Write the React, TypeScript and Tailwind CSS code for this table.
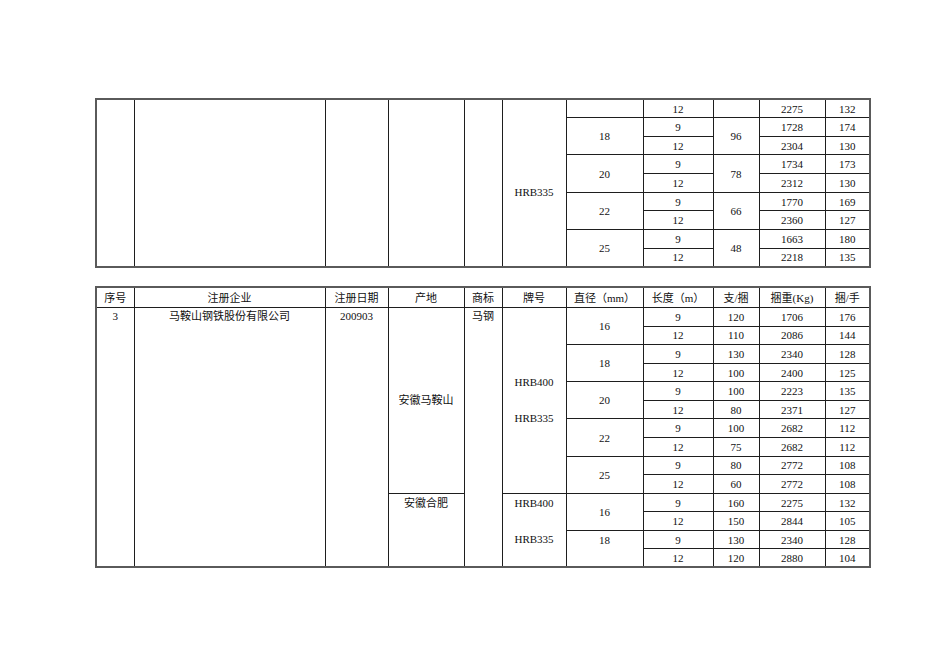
import React from "react";

const cell =
  "border border-[#1e1e1e] p-0 text-center align-middle text-[11px] leading-[14px] text-[#111]";

const t1Groups = [
  { d: "18", n: "96", rows: [["9", "1728", "174"], ["12", "2304", "130"]] },
  { d: "20", n: "78", rows: [["9", "1734", "173"], ["12", "2312", "130"]] },
  { d: "22", n: "66", rows: [["9", "1770", "169"], ["12", "2360", "127"]] },
  { d: "25", n: "48", rows: [["9", "1663", "180"], ["12", "2218", "135"]] },
];

const t2Rows = [
  ["9", "120", "1706", "176"],
  ["12", "110", "2086", "144"],
  ["9", "130", "2340", "128"],
  ["12", "100", "2400", "125"],
  ["9", "100", "2223", "135"],
  ["12", "80", "2371", "127"],
  ["9", "100", "2682", "112"],
  ["12", "75", "2682", "112"],
  ["9", "80", "2772", "108"],
  ["12", "60", "2772", "108"],
  ["9", "160", "2275", "132"],
  ["12", "150", "2844", "105"],
  ["9", "130", "2340", "128"],
  ["12", "120", "2880", "104"],
];

function Cols() {
  return (
    <colgroup>
      <col className="w-[38px]" />
      <col className="w-[191px]" />
      <col className="w-[63px]" />
      <col className="w-[76px]" />
      <col className="w-[38px]" />
      <col className="w-[64px]" />
      <col className="w-[77px]" />
      <col className="w-[70px]" />
      <col className="w-[46px]" />
      <col className="w-[66px]" />
      <col className="w-[45px]" />
    </colgroup>
  );
}

function Grades() {
  return (
    <>
      <div className="h-[18px] leading-[18px]">HRB400</div>
      <div className="h-[18px] leading-[18px]">&nbsp;</div>
      <div className="h-[18px] leading-[18px]">HRB335</div>
    </>
  );
}

export default function App() {
  const diam2: Record<number, { t: string; span: number; top?: boolean }> = {
    0: { t: "16", span: 2 },
    2: { t: "18", span: 2 },
    4: { t: "20", span: 2 },
    6: { t: "22", span: 2 },
    8: { t: "25", span: 2 },
    10: { t: "16", span: 2 },
    12: { t: "18", span: 2, top: true },
  };
  return (
    <div className="w-[950px] h-[672px] bg-white font-['Liberation_Serif','Noto_Sans_CJK_SC',serif] pl-[95px] pt-[98px]">
      <table className="table-fixed border-collapse w-[776px] border-2 border-[#5a5a5a]">
        <Cols />
        <tbody>
          <tr className="h-[18.67px]">
            <td className={cell} rowSpan={9}></td>
            <td className={cell} rowSpan={9}></td>
            <td className={cell} rowSpan={9}></td>
            <td className={cell} rowSpan={9}></td>
            <td className={cell} rowSpan={9}></td>
            <td className={cell + " pt-[18px]"} rowSpan={9}>
              HRB335
            </td>
            <td className={cell}></td>
            <td className={cell}>12</td>
            <td className={cell}></td>
            <td className={cell}>2275</td>
            <td className={cell}>132</td>
          </tr>
          {t1Groups.map((g) =>
            g.rows.map((r, i) => (
              <tr key={g.d + i} className="h-[18.67px]">
                {i === 0 && (
                  <td className={cell} rowSpan={2}>
                    {g.d}
                  </td>
                )}
                <td className={cell}>{r[0]}</td>
                {i === 0 && (
                  <td className={cell} rowSpan={2}>
                    {g.n}
                  </td>
                )}
                <td className={cell}>{r[1]}</td>
                <td className={cell}>{r[2]}</td>
              </tr>
            ))
          )}
        </tbody>
      </table>

      <table className="table-fixed border-collapse w-[776px] border-2 border-[#5a5a5a] mt-[18px]">
        <Cols />
        <tbody>
          <tr className="h-[20.7px]">
            {[
              "序号",
              "注册企业",
              "注册日期",
              "产地",
              "商标",
              "牌号",
              "直径（mm）",
              "长度（m）",
              "支/捆",
              "捆重(Kg)",
              "捆/手",
            ].map((h) => (
              <td key={h} className={cell}>
                {h}
              </td>
            ))}
          </tr>
          {t2Rows.map((r, i) => (
            <tr key={i} className="h-[18.57px]">
              {i === 0 && (
                <>
                  <td className={cell + " align-top pt-[1px]"} rowSpan={14}>
                    3
                  </td>
                  <td className={cell + " align-top pt-[1px]"} rowSpan={14}>
                    马鞍山钢铁股份有限公司
                  </td>
                  <td className={cell + " align-top pt-[1px]"} rowSpan={14}>
                    200903
                  </td>
                  <td className={cell} rowSpan={10}>
                    安徽马鞍山
                  </td>
                  <td className={cell + " align-top pt-[1px]"} rowSpan={14}>
                    马钢
                  </td>
                  <td className={cell} rowSpan={10}>
                    <Grades />
                  </td>
                </>
              )}
              {i === 10 && (
                <>
                  <td className={cell + " align-top pt-[2px]"} rowSpan={4}>
                    安徽合肥
                  </td>
                  <td className={cell + " align-top"} rowSpan={4}>
                    <Grades />
                  </td>
                </>
              )}
              {diam2[i] && (
                <td
                  className={cell + (diam2[i].top ? " align-top pt-[2px]" : "")}
                  rowSpan={diam2[i].span}
                >
                  {diam2[i].t}
                </td>
              )}
              <td className={cell}>{r[0]}</td>
              <td className={cell}>{r[1]}</td>
              <td className={cell}>{r[2]}</td>
              <td className={cell}>{r[3]}</td>
            </tr>
          ))}
        </tbody>
      </table>
    </div>
  );
}
